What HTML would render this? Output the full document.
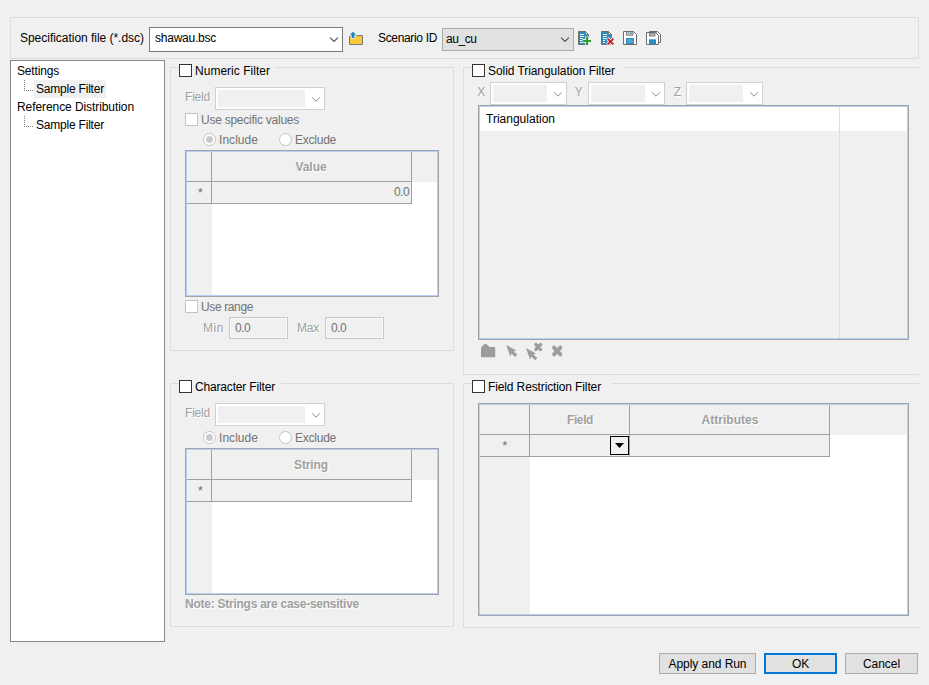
<!DOCTYPE html>
<html><head><meta charset="utf-8"><title>Specification</title>
<style>
html,body{margin:0;padding:0;}
body{width:929px;height:685px;background:#f0f0f0;position:relative;overflow:hidden;font-family:"Liberation Sans", sans-serif;font-size:12px;}
div,svg.a{position:absolute;}
.t{position:absolute;white-space:pre;line-height:16px;height:16px;}
</style></head><body>
<div style="left:10px;top:17px;width:909px;height:42px;border:1px solid #dcdcdc;box-sizing:border-box;"></div>
<div style="left:149px;top:27px;width:194px;height:25px;border:1px solid #7a7a7a;background:#fff;box-sizing:border-box;"></div>
<svg class="a" style="left:328px;top:35px" width="12" height="8" viewBox="328 35 12 8"><path d="M330.1 37.6 L334 41.5 L337.9 37.6" fill="none" stroke="#505050" stroke-width="1.1"/></svg>
<div style="left:442px;top:28px;width:132px;height:23px;border:1px solid #adadad;background:#e1e1e1;box-sizing:border-box;"></div>
<svg class="a" style="left:559px;top:35px" width="12" height="8" viewBox="559 35 12 8"><path d="M561.1 37.6 L565 41.5 L568.9 37.6" fill="none" stroke="#505050" stroke-width="1.1"/></svg>
<svg class="a" style="left:349px;top:31px" width="15" height="15" viewBox="0 0 15 15">
<path d="M0.5 13.5 V5.5 H5.5 L7 4.5 H13.5 V13.5 Z" fill="#f9c635" stroke="#7a7a7a" stroke-width="1"/>
<path d="M4 0.2 L7.8 4.2 H5.8 V7.6 H2.2 V4.2 H0.2 Z" fill="#1e84b8" stroke="#f4f4f4" stroke-width="0.9"/>
</svg>
<svg class="a" style="left:578px;top:31px" width="14" height="16" viewBox="0 0 14 16">
<path d="M0.5 0.5 H7.5 L10.5 3.5 V13.5 H0.5 Z" fill="#2b8cc0" stroke="#6d6d6d" stroke-width="1"/>
<path d="M7.5 0.5 V3.5 H10.5 Z" fill="#fff" stroke="#6d6d6d" stroke-width="0.8"/>
<path d="M2 3.5 H6 M2 5.5 H6 M2 7.5 H5 M2 9.5 H4 M2 11.5 H4" stroke="#fff" stroke-width="1"/>
<path d="M9 5.5 V14.5 M4.5 10 H13.5" stroke="#f0f0f0" stroke-width="3.8"/><path d="M9 6 V14 M5 10 H13" stroke="#2f9e2f" stroke-width="2.1"/></svg>
<svg class="a" style="left:601px;top:31px" width="14" height="16" viewBox="0 0 14 16">
<path d="M0.5 0.5 H7.5 L10.5 3.5 V13.5 H0.5 Z" fill="#2b8cc0" stroke="#6d6d6d" stroke-width="1"/>
<path d="M7.5 0.5 V3.5 H10.5 Z" fill="#fff" stroke="#6d6d6d" stroke-width="0.8"/>
<path d="M2 3.5 H6 M2 5.5 H6 M2 7.5 H5 M2 9.5 H4 M2 11.5 H4" stroke="#fff" stroke-width="1"/>
<path d="M6.3 7.3 L12.7 13.7 M12.7 7.3 L6.3 13.7" stroke="#f0f0f0" stroke-width="3.6"/><path d="M6.6 7.6 L12.4 13.4 M12.4 7.6 L6.6 13.4" stroke="#c4262e" stroke-width="1.9"/></svg>
<svg class="a" style="left:623px;top:31px" width="15" height="15" viewBox="0 0 15 15">
<path d="M0.5 0.5 H10.5 L13.5 3.5 V13.5 H0.5 Z" fill="#fff" stroke="#6d6d6d" stroke-width="1"/>
<rect x="3.5" y="0.8" width="6.5" height="3.4" fill="#c8c8c8" stroke="#6d6d6d" stroke-width="0.8"/>
<rect x="7" y="1.8" width="1.4" height="1.4" fill="#2b8cc0"/>
<rect x="3" y="7" width="8" height="6" fill="#2b8cc0"/>
<path d="M4 9 H10 M4 11 H10" stroke="#9fd0ea" stroke-width="0.7"/>
</svg>
<svg class="a" style="left:646px;top:31px" width="15" height="15" viewBox="0 0 15 15"><path d="M3.5 0.5 H11.5 L14.5 3.5 V11.5 H3.5 Z" fill="#fff" stroke="#6d6d6d" stroke-width="1"/><rect x="6" y="1" width="5" height="2" fill="#aaa"/>
<path d="M0.5 1.5 H9.5 L12.5 4.5 V13.5 H0.5 Z" fill="#fff" stroke="#6d6d6d" stroke-width="1"/>
<rect x="3.5" y="2" width="5.5" height="3" fill="#b5b5b5" stroke="#6d6d6d" stroke-width="0.8"/>
<rect x="3" y="8.3" width="7" height="5" fill="#2b8cc0"/>
</svg>
<div style="left:10px;top:60px;width:155px;height:582px;border:1px solid #828790;background:#fff;box-sizing:border-box;"></div>
<div style="left:34px;top:80px;width:72px;height:18px;background:#f0f0f0;"></div>
<div style="left:24px;top:80px;width:1px;height:10px;background-image:linear-gradient(#808080 50%, transparent 50%);background-size:1px 2px;"></div><div style="left:24px;top:90px;width:9px;height:1px;background-image:linear-gradient(90deg,#808080 50%, transparent 50%);background-size:2px 1px;"></div>
<div style="left:24px;top:116px;width:1px;height:10px;background-image:linear-gradient(#808080 50%, transparent 50%);background-size:1px 2px;"></div><div style="left:24px;top:126px;width:9px;height:1px;background-image:linear-gradient(90deg,#808080 50%, transparent 50%);background-size:2px 1px;"></div>
<div style="left:170px;top:67px;width:284px;height:284px;border:1px solid #dcdcdc;box-sizing:border-box;"></div>
<div style="left:179px;top:62px;width:97px;height:16px;background:#f0f0f0;"></div>
<div style="left:170px;top:383px;width:284px;height:244px;border:1px solid #dcdcdc;box-sizing:border-box;"></div>
<div style="left:179px;top:378px;width:102px;height:16px;background:#f0f0f0;"></div>
<div style="left:463px;top:67px;width:456px;height:308px;border:1px solid #dcdcdc;border-right:none;box-sizing:border-box;"></div>
<div style="left:472px;top:62px;width:151px;height:16px;background:#f0f0f0;"></div>
<div style="left:463px;top:383px;width:456px;height:245px;border:1px solid #dcdcdc;border-right:none;box-sizing:border-box;"></div>
<div style="left:472px;top:377px;width:140px;height:16px;background:#f0f0f0;"></div>
<div style="left:179px;top:64px;width:13px;height:13px;border:1px solid #333;background:#fff;box-sizing:border-box;"></div>
<div style="left:179px;top:380px;width:13px;height:13px;border:1px solid #333;background:#fff;box-sizing:border-box;"></div>
<div style="left:472px;top:64px;width:13px;height:13px;border:1px solid #333;background:#fff;box-sizing:border-box;"></div>
<div style="left:472px;top:380px;width:13px;height:13px;border:1px solid #333;background:#fff;box-sizing:border-box;"></div>
<div style="left:185px;top:113px;width:13px;height:13px;border:1px solid #c4c4c4;background:#fff;box-sizing:border-box;"></div>
<div style="left:185px;top:300px;width:13px;height:13px;border:1px solid #c4c4c4;background:#fff;box-sizing:border-box;"></div>
<div style="left:203px;top:133px;width:13px;height:13px;border:1px solid #c4c4c4;border-radius:50%;background:#fff;box-sizing:border-box;"><div style="left:2px;top:2px;width:7px;height:7px;border-radius:50%;background:#cacaca"></div></div>
<div style="left:279px;top:133px;width:13px;height:13px;border:1px solid #c4c4c4;border-radius:50%;background:#fff;box-sizing:border-box;"></div>
<div style="left:203px;top:431px;width:13px;height:13px;border:1px solid #c4c4c4;border-radius:50%;background:#fff;box-sizing:border-box;"><div style="left:2px;top:2px;width:7px;height:7px;border-radius:50%;background:#cacaca"></div></div>
<div style="left:279px;top:431px;width:13px;height:13px;border:1px solid #c4c4c4;border-radius:50%;background:#fff;box-sizing:border-box;"></div>
<div style="left:215px;top:87px;width:110px;height:23px;border:1px solid #d0d0d0;background:#fff;box-sizing:border-box;"></div><div style="left:218px;top:90px;width:87px;height:17px;background:#f0f0f0;"></div><svg class="a" style="left:311px;top:95.5px" width="10" height="7" viewBox="0 0 10 7"><path d="M1.2 1.4 L5 5.2 L8.8 1.4" fill="none" stroke="#8c8c8c" stroke-width="1"/></svg>
<div style="left:215px;top:403px;width:110px;height:23px;border:1px solid #d0d0d0;background:#fff;box-sizing:border-box;"></div><div style="left:218px;top:406px;width:87px;height:17px;background:#f0f0f0;"></div><svg class="a" style="left:311px;top:411.5px" width="10" height="7" viewBox="0 0 10 7"><path d="M1.2 1.4 L5 5.2 L8.8 1.4" fill="none" stroke="#8c8c8c" stroke-width="1"/></svg>
<div style="left:490px;top:82px;width:77px;height:23px;border:1px solid #d0d0d0;background:#fff;box-sizing:border-box;"></div><div style="left:493px;top:85px;width:54px;height:17px;background:#f0f0f0;"></div><svg class="a" style="left:553px;top:90.5px" width="10" height="7" viewBox="0 0 10 7"><path d="M1.2 1.4 L5 5.2 L8.8 1.4" fill="none" stroke="#8c8c8c" stroke-width="1"/></svg>
<div style="left:588px;top:82px;width:77px;height:23px;border:1px solid #d0d0d0;background:#fff;box-sizing:border-box;"></div><div style="left:591px;top:85px;width:54px;height:17px;background:#f0f0f0;"></div><svg class="a" style="left:651px;top:90.5px" width="10" height="7" viewBox="0 0 10 7"><path d="M1.2 1.4 L5 5.2 L8.8 1.4" fill="none" stroke="#8c8c8c" stroke-width="1"/></svg>
<div style="left:686px;top:82px;width:77px;height:23px;border:1px solid #d0d0d0;background:#fff;box-sizing:border-box;"></div><div style="left:689px;top:85px;width:54px;height:17px;background:#f0f0f0;"></div><svg class="a" style="left:749px;top:90.5px" width="10" height="7" viewBox="0 0 10 7"><path d="M1.2 1.4 L5 5.2 L8.8 1.4" fill="none" stroke="#8c8c8c" stroke-width="1"/></svg>
<div style="left:229px;top:317px;width:59px;height:22px;border:1px solid #c8c8c8;background:#f0f0f0;box-sizing:border-box;box-shadow:inset 0 0 0 1px #fafafa;"></div>
<div style="left:325px;top:317px;width:59px;height:22px;border:1px solid #c8c8c8;background:#f0f0f0;box-sizing:border-box;box-shadow:inset 0 0 0 1px #fafafa;"></div>
<div style="left:185px;top:150px;width:254px;height:147px;border:1px solid #a0a3a8;box-shadow:inset 0 0 0 1px #b4d0f2;box-sizing:border-box;background:#fff;"></div><div style="left:187px;top:152px;width:25px;height:143px;background:#f0f0f0;"></div><div style="left:187px;top:152px;width:250px;height:30px;background:#f0f0f0;"></div><div style="left:211px;top:182px;width:200px;height:21px;background:#f0f0f0;"></div><div style="left:211px;top:152px;width:1px;height:51px;background:#a0a0a0;"></div><div style="left:411px;top:152px;width:1px;height:51px;background:#a0a0a0;"></div><div style="left:187px;top:181px;width:225px;height:1px;background:#a0a0a0;"></div><div style="left:187px;top:203px;width:225px;height:1px;background:#a0a0a0;"></div>
<div style="left:185px;top:448px;width:254px;height:147px;border:1px solid #a0a3a8;box-shadow:inset 0 0 0 1px #b4d0f2;box-sizing:border-box;background:#fff;"></div><div style="left:187px;top:450px;width:25px;height:143px;background:#f0f0f0;"></div><div style="left:187px;top:450px;width:250px;height:30px;background:#f0f0f0;"></div><div style="left:211px;top:480px;width:200px;height:21px;background:#f0f0f0;"></div><div style="left:211px;top:450px;width:1px;height:51px;background:#a0a0a0;"></div><div style="left:411px;top:450px;width:1px;height:51px;background:#a0a0a0;"></div><div style="left:187px;top:479px;width:225px;height:1px;background:#a0a0a0;"></div><div style="left:187px;top:501px;width:225px;height:1px;background:#a0a0a0;"></div>
<div style="left:478px;top:105px;width:431px;height:235px;border:1px solid #a0a3a8;box-shadow:inset 0 0 0 1px #b4d0f2;box-sizing:border-box;background:#f0f0f0;"></div>
<div style="left:480px;top:107px;width:427px;height:24px;background:#fff;"></div>
<div style="left:839px;top:107px;width:1px;height:231px;background:#d5dfee;"></div>
<svg class="a" style="left:476px;top:338px" width="96" height="24" viewBox="476 338 96 24">
<path d="M481.6 357.2 Q481 357.2 481 356.6 V348.6 Q481 347.4 481.8 346.6 L484.6 344 Q485.4 343.5 486.2 344 L489.6 347 H494.6 Q495.2 347 495.2 347.6 V356.6 Q495.2 357.2 494.6 357.2 Z" fill="#9c9c9c"/>
<path d="M506.2 345 L516.2 350.4 L513.6 351.6 L517.3 354.6 L515 356.9 L511.6 353.4 L510.2 356.4 Z" fill="#9c9c9c"/>
<path d="M526 348 L536 353.4 L533.4 354.6 L537.4 358 L535.1 360.3 L531.4 356.4 L530 359.4 Z" fill="#9c9c9c"/>
<path d="M536 344.6 L540.6 349.4 M540.6 344.6 L536 349.4" stroke="#9c9c9c" stroke-width="3.5" stroke-linecap="round"/>
<path d="M554 347.6 L560.4 354.4 M560.4 347.6 L554 354.4" stroke="#9c9c9c" stroke-width="3.8" stroke-linecap="round"/>
</svg>
<div style="left:478px;top:403px;width:431px;height:213px;border:1px solid #a0a3a8;box-shadow:inset 0 0 0 1px #b4d0f2;box-sizing:border-box;background:#fff;"></div><div style="left:480px;top:405px;width:50px;height:209px;background:#f0f0f0;"></div><div style="left:480px;top:405px;width:427px;height:30px;background:#f0f0f0;"></div><div style="left:530px;top:435px;width:300px;height:21px;background:#f0f0f0;"></div><div style="left:529px;top:405px;width:1px;height:51px;background:#a0a0a0;"></div><div style="left:629px;top:405px;width:1px;height:51px;background:#a0a0a0;"></div><div style="left:829px;top:405px;width:1px;height:51px;background:#a0a0a0;"></div><div style="left:480px;top:434px;width:350px;height:1px;background:#a0a0a0;"></div><div style="left:480px;top:456px;width:350px;height:1px;background:#a0a0a0;"></div><div style="left:610px;top:436px;width:19px;height:19px;border:1px solid #000;box-sizing:border-box;background:#f0f0f0;"><svg class="a" style="left:4px;top:6px" width="9" height="5" viewBox="0 0 9 5"><path d="M0 0 H9 L4.5 5 Z" fill="#000"/></svg></div>
<div style="left:659px;top:653px;width:97px;height:21px;border:1px solid #adadad;background:#e1e1e1;box-sizing:border-box;"></div>
<div style="left:764px;top:653px;width:73px;height:21px;border:2px solid #0078d7;background:#e1e1e1;box-sizing:border-box;"></div>
<div style="left:845px;top:653px;width:73px;height:21px;border:1px solid #adadad;background:#e1e1e1;box-sizing:border-box;"></div>
<span class="t" style="left:20.00px;top:29.50px;color:#000;letter-spacing:-0.028px;">Specification file (*.dsc)</span>
<span class="t" style="left:155.00px;top:29.50px;color:#000;letter-spacing:-0.237px;">shawau.bsc</span>
<span class="t" style="left:378.00px;top:29.50px;color:#000;letter-spacing:-0.337px;">Scenario ID</span>
<span class="t" style="left:446.00px;top:31.30px;color:#000;letter-spacing:-0.441px;">au_cu</span>
<span class="t" style="left:17.00px;top:63.00px;color:#000;letter-spacing:-0.170px;">Settings</span>
<span class="t" style="left:36.00px;top:81.00px;color:#000;letter-spacing:-0.207px;">Sample Filter</span>
<span class="t" style="left:17.00px;top:99.00px;color:#000;letter-spacing:-0.079px;">Reference Distribution</span>
<span class="t" style="left:36.00px;top:117.00px;color:#000;letter-spacing:-0.207px;">Sample Filter</span>
<span class="t" style="left:195.00px;top:63.00px;color:#000;letter-spacing:0.023px;">Numeric Filter</span>
<span class="t" style="left:185.00px;top:89.00px;color:#a0a0a0;letter-spacing:-0.203px;text-shadow:1px 1px 0 #fff;">Field</span>
<span class="t" style="left:201.00px;top:112.00px;color:#737373;letter-spacing:-0.248px;">Use specific values</span>
<span class="t" style="left:219.00px;top:131.50px;color:#737373;letter-spacing:0.042px;">Include</span>
<span class="t" style="left:295.00px;top:131.50px;color:#737373;letter-spacing:-0.243px;">Exclude</span>
<span class="t" style="left:295.50px;top:159.00px;color:#a0a0a0;letter-spacing:-0.072px;font-weight:bold;text-shadow:1px 1px 0 #fff;">Value</span>
<span class="t" style="left:197.67px;top:184.80px;color:#737373;font-size:13px;">*</span>
<span class="t" style="left:394.00px;top:184.00px;color:#737373;letter-spacing:-0.562px;">0.0</span>
<span class="t" style="left:201.00px;top:299.00px;color:#737373;letter-spacing:-0.375px;">Use range</span>
<span class="t" style="left:203.00px;top:320.00px;color:#a0a0a0;letter-spacing:0.552px;text-shadow:1px 1px 0 #fff;">Min</span>
<span class="t" style="left:235.00px;top:320.00px;color:#737373;letter-spacing:-0.562px;">0.0</span>
<span class="t" style="left:297.00px;top:320.00px;color:#a0a0a0;letter-spacing:-0.224px;text-shadow:1px 1px 0 #fff;">Max</span>
<span class="t" style="left:331.00px;top:320.00px;color:#737373;letter-spacing:-0.562px;">0.0</span>
<span class="t" style="left:195.00px;top:379.00px;color:#000;letter-spacing:-0.168px;">Character Filter</span>
<span class="t" style="left:185.00px;top:405.00px;color:#a0a0a0;letter-spacing:-0.203px;text-shadow:1px 1px 0 #fff;">Field</span>
<span class="t" style="left:219.00px;top:429.50px;color:#737373;letter-spacing:0.042px;">Include</span>
<span class="t" style="left:295.00px;top:429.50px;color:#737373;letter-spacing:-0.243px;">Exclude</span>
<span class="t" style="left:294.00px;top:457.00px;color:#a0a0a0;letter-spacing:-0.112px;font-weight:bold;text-shadow:1px 1px 0 #fff;">String</span>
<span class="t" style="left:197.67px;top:482.80px;color:#737373;font-size:13px;">*</span>
<span class="t" style="left:185.00px;top:596.00px;color:#a0a0a0;letter-spacing:-0.252px;font-weight:bold;text-shadow:1px 1px 0 #fff;">Note: Strings are case-sensitive</span>
<span class="t" style="left:488.00px;top:63.00px;color:#000;letter-spacing:-0.067px;">Solid Triangulation Filter</span>
<span class="t" style="left:477.20px;top:84.00px;color:#a0a0a0;text-shadow:1px 1px 0 #fff;">X</span>
<span class="t" style="left:574.80px;top:84.00px;color:#a0a0a0;text-shadow:1px 1px 0 #fff;">Y</span>
<span class="t" style="left:673.80px;top:84.00px;color:#a0a0a0;text-shadow:1px 1px 0 #fff;">Z</span>
<span class="t" style="left:486.00px;top:111.00px;color:#000;letter-spacing:0.005px;">Triangulation</span>
<span class="t" style="left:488.00px;top:379.00px;color:#000;letter-spacing:-0.126px;">Field Restriction Filter</span>
<span class="t" style="left:567.00px;top:412.00px;color:#a0a0a0;letter-spacing:-0.403px;font-weight:bold;text-shadow:1px 1px 0 #fff;">Field</span>
<span class="t" style="left:701.50px;top:412.00px;color:#a0a0a0;letter-spacing:0.033px;font-weight:bold;text-shadow:1px 1px 0 #fff;">Attributes</span>
<span class="t" style="left:502.17px;top:437.80px;color:#737373;font-size:13px;">*</span>
<span class="t" style="left:668.50px;top:656.00px;color:#000;letter-spacing:-0.056px;">Apply and Run</span>
<span class="t" style="left:792.00px;top:656.00px;color:#000;letter-spacing:-0.172px;">OK</span>
<span class="t" style="left:863.00px;top:656.00px;color:#000;letter-spacing:-0.060px;">Cancel</span>
</body></html>
